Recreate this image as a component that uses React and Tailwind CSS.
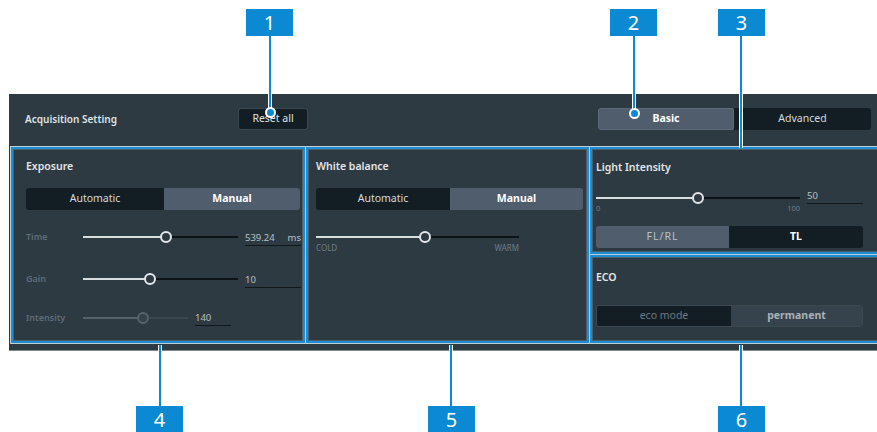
import React from "react";

const Slider = ({ width, pct, disabled = false }) => (
  <div className="relative h-[12px] flex items-center" style={{ width }}>
    <div className={`h-[2px] ${disabled ? "bg-[#56626b]" : "bg-[#d8dde0]"}`} style={{ width: `${pct}%` }} />
    <div className={`h-[2px] flex-1 ${disabled ? "bg-[#3b4750]" : "bg-[#0c1316]"}`} />
    <div
      className={`absolute top-0 w-[12px] h-[12px] -ml-[6px] rounded-full border-2 ${
        disabled ? "border-[#56626b] bg-[#36424b]" : "border-[#e4e8ea] bg-[#2e3a42]"
      }`}
      style={{ left: `${pct}%` }}
    />
  </div>
);

const Segmented = ({ left, right, split, className = "" }) => (
  <div className={`flex h-[22px] rounded-[3px] overflow-hidden text-[10.5px] ${className}`}>
    {[left, right].map((s, i) => (
      <div
        key={i}
        className={`flex items-center justify-center ${s.cls}`}
        style={i === 0 ? { width: split } : { flex: 1 }}
      >
        {s.label}
      </div>
    ))}
  </div>
);

const ValueField = ({ width, value, unit }) => (
  <div className="flex items-center h-[14px] border-b border-[#10181c] text-[9.5px] text-[#b7c0c5]" style={{ width }}>
    <span>{value}</span>
    {unit && <span className="ml-auto">{unit}</span>}
  </div>
);

const Frame = ({ className = "", children }) => (
  <div className={`border border-[#c3ccd1] ${className}`}>
    <div className="h-full border-2 border-[#1a8fd8]">
      <div className="h-full border border-[#8a969c]/40">{children}</div>
    </div>
  </div>
);

const Callout = ({ n, x, y }) => (
  <div
    className="absolute w-[47px] h-[27px] bg-[#0b8ad3] text-white text-[20px] leading-[27px] text-center"
    style={{ left: x, top: y }}
  >
    {n}
  </div>
);

const Line = ({ x, y1, y2 }) => (
  <div
    className="absolute w-[4px] bg-[#0b8ad3] border-x border-white"
    style={{ left: x - 2, top: y1, height: y2 - y1 }}
  />
);

const Dot = ({ x, y }) => (
  <div
    className="absolute w-[11px] h-[11px] rounded-full bg-[#0b8ad3] border-2 border-white"
    style={{ left: x - 5.5, top: y - 5.5 }}
  />
);

const dark = { cls: "bg-[#131e24] text-[#d5dbde]" };
const active = { cls: "bg-[#4f5d6c] text-white font-bold" };

export default function App() {
  return (
    <div className="relative w-[877px] h-[432px] bg-white overflow-hidden font-['Noto_Sans',sans-serif]">
      <div className="h-[94px]" />
      <div className="ml-[9px] h-[257px] bg-[#2e3a42] flex flex-col border-b border-[#7e888e]">
        {/* header */}
        <div className="h-[52px] flex items-start pt-[14px] pr-[6px]">
          <div className="w-[229px] pl-[16px] h-[23px] flex items-center text-[10px] font-semibold text-[#dfe4e7]">
            Acquisition Setting
          </div>
          <div className="w-[70px] h-[22px] rounded-[3px] bg-[#131e24] border border-[#3c4850] flex items-center justify-center text-[10.5px] text-[#dfe4e7]">
            Reset all
          </div>
          <div className="ml-auto w-[273px]">
            <Segmented
              split={136}
              left={{ label: "Basic", cls: "bg-[#4f5d6c] text-white font-bold border border-[#5d6b79] rounded-[2px]" }}
              right={{ label: "Advanced", cls: "bg-[#131e24] text-[#d5dbde]" }}
            />
          </div>
        </div>

        {/* sections */}
        <div className="flex h-[200px] pl-[1px]">
          <Frame className="w-[296px] h-[198px]">
            <div className="pl-[12px] pr-[1px]">
              <div className="mt-[10px] h-[14px] flex items-center text-[10.5px] font-semibold text-[#e2e6e9]">Exposure</div>
              <Segmented
                className="mt-[14px] w-[274px]"
                split={138}
                left={{ label: "Automatic", cls: dark.cls }}
                right={{ label: "Manual", cls: active.cls }}
              />
              <div className="mt-[19px] flex items-center h-[16px]">
                <div className="w-[57px] text-[9px] font-semibold text-[#5e6c76]">Time</div>
                <Slider width={155} pct={53.5} />
                <div className="ml-[7px] pt-[3px]">
                  <ValueField width={56} value="539.24" unit="ms" />
                </div>
              </div>
              <div className="mt-[26px] flex items-center h-[16px]">
                <div className="w-[57px] text-[9px] font-semibold text-[#5e6c76]">Gain</div>
                <Slider width={155} pct={43} />
                <div className="ml-[7px] pt-[3px]">
                  <ValueField width={56} value="10" />
                </div>
              </div>
              <div className="mt-[23px] flex items-center h-[16px]">
                <div className="w-[57px] text-[9px] font-semibold text-[#5e6c76]">Intensity</div>
                <Slider width={105} pct={57} disabled />
                <div className="ml-[7px] pt-[1px]">
                  <ValueField width={36} value="140" />
                </div>
              </div>
            </div>
          </Frame>

          <Frame className="w-[285px] h-[198px] -ml-px">
            <div className="pl-[7px] pr-[3px]">
              <div className="mt-[10px] h-[14px] flex items-center text-[10.5px] font-semibold text-[#e2e6e9]">White balance</div>
              <Segmented
                className="mt-[14px] w-[267px]"
                split={134}
                left={{ label: "Automatic", cls: dark.cls }}
                right={{ label: "Manual", cls: active.cls }}
              />
              <div className="mt-[21px]">
                <Slider width={203} pct={53.7} />
                <div className="w-[203px] flex justify-between text-[8px] text-[#6f7d86] -mt-[1px]">
                  <span>COLD</span>
                  <span>WARM</span>
                </div>
              </div>
            </div>
          </Frame>

          <div className="flex-1 flex flex-col -ml-px -mr-[8px]">
            <Frame className="h-[109px]">
              <div className="pl-[3px] pr-[9px]">
                <div className="mt-[11px] h-[14px] flex items-center text-[10.5px] font-semibold text-[#e2e6e9]">Light Intensity</div>
                <div className="mt-[17px] flex items-start">
                  <div>
                    <Slider width={204} pct={50} />
                    <div className="w-[204px] flex justify-between text-[7.5px] text-[#6f7d86] -mt-[1px]">
                      <span>0</span>
                      <span>100</span>
                    </div>
                  </div>
                  <div className="ml-[7px] -mt-[2px]">
                    <ValueField width={56} value="50" />
                  </div>
                </div>
                <Segmented
                  className="mt-[12px] w-[267px]"
                  split={133}
                  left={{ label: "FL/RL", cls: "bg-[#4f5d6c] text-[#b9c2c8] tracking-[1px]" }}
                  right={{ label: "TL", cls: "bg-[#131e24] text-white font-bold" }}
                />
              </div>
            </Frame>
            <Frame className="h-[90px] -mt-px">
              <div className="pl-[3px] pr-[9px]">
                <div className="mt-[13px] h-[14px] flex items-center text-[10.5px] font-semibold text-[#e2e6e9]">ECO</div>
                <Segmented
                  className="mt-[20px] w-[267px] border border-[#3c4850]"
                  split={134}
                  left={{ label: "eco mode", cls: "bg-[#131e24] text-[#6c7982]" }}
                  right={{ label: "permanent", cls: "bg-[#36434c] text-[#a9b2b8] font-bold" }}
                />
              </div>
            </Frame>
          </div>
        </div>
      </div>

      {/* callouts */}
      <Line x={270} y1={36} y2={112} />
      <Dot x={270} y={112} />
      <Callout n="1" x={246} y={9} />
      <Line x={634} y1={36} y2={113} />
      <Dot x={634} y={113} />
      <Callout n="2" x={610} y={9} />
      <Line x={741} y1={36} y2={148} />
      <Callout n="3" x={718} y={9} />
      <Line x={160} y1={345} y2={406} />
      <Callout n="4" x={136} y={406} />
      <Line x={451} y1={345} y2={406} />
      <Callout n="5" x={428} y={406} />
      <Line x={741} y1={345} y2={406} />
      <Callout n="6" x={718} y={406} />
    </div>
  );
}
